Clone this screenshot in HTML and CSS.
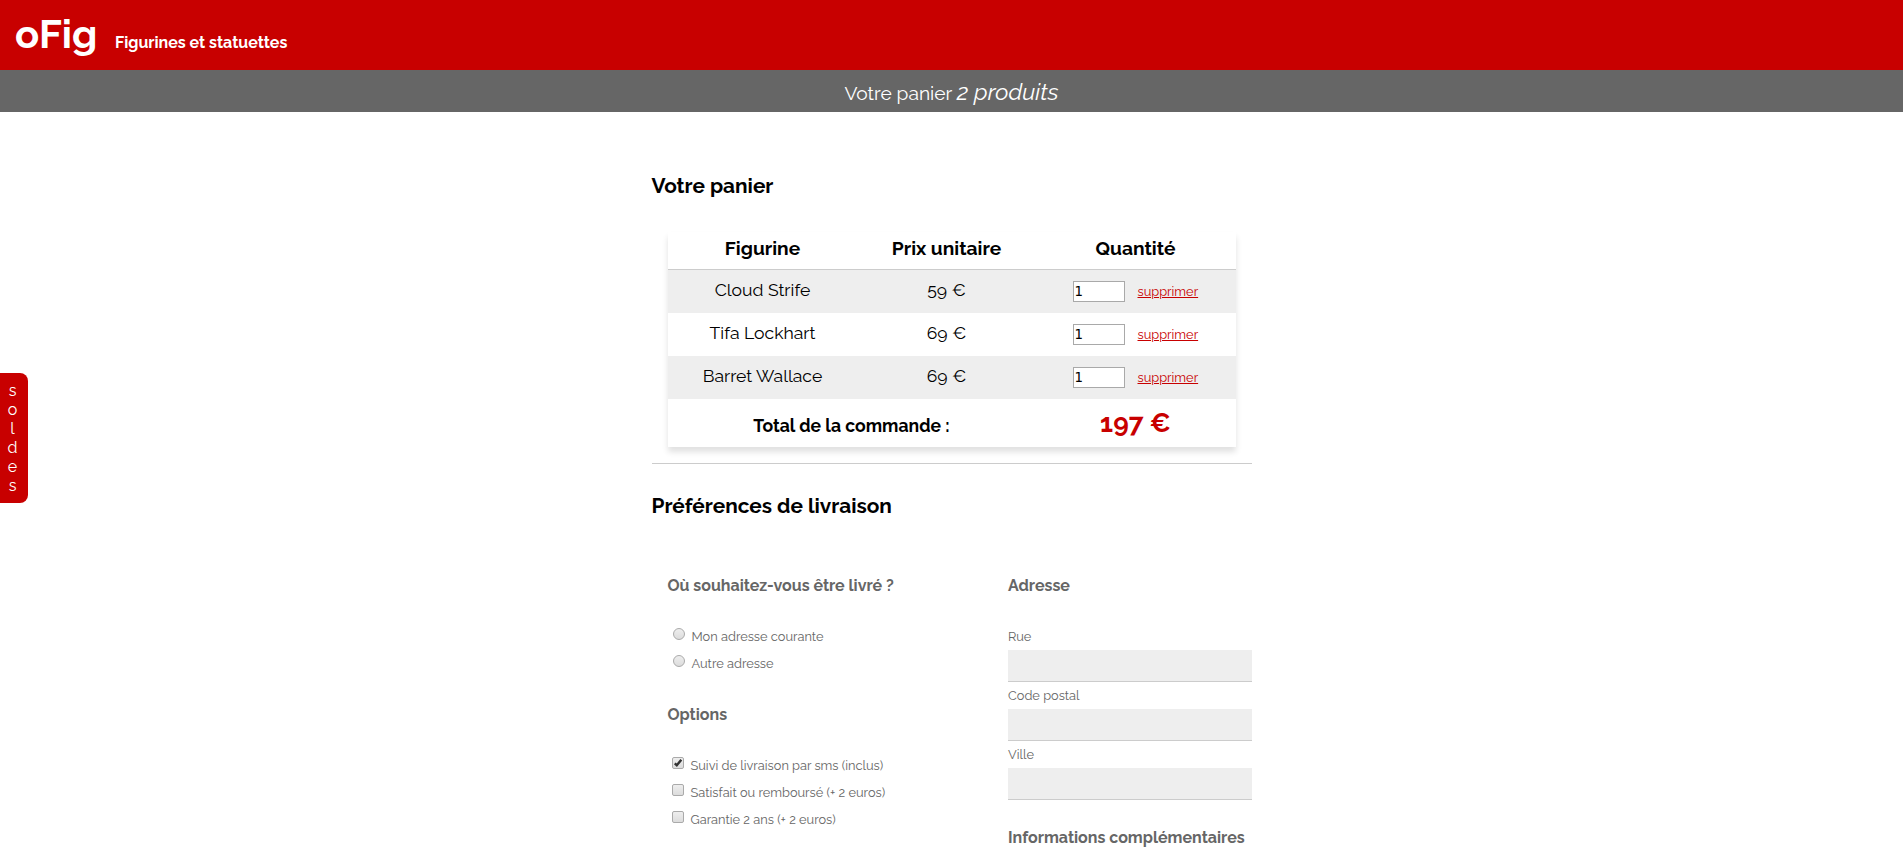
FILE: index.html
```
<!DOCTYPE html>
<html lang="fr">
<head>
<meta charset="utf-8">
<title>oFig - Votre panier</title>
<link rel="stylesheet" href="styles.css">
</head>
<body>
<header class="header">
  <h1 class="logo">oFig</h1>
  <p class="tagline">Figurines et statuettes</p>
</header>
<div class="cart-bar">Votre panier <em>2 produits</em></div>
<aside class="sales"><span>s</span><span>o</span><span>l</span><span>d</span><span>e</span><span>s</span></aside>
<main class="main">
  <h2 class="title">Votre panier</h2>
  <table class="cart">
    <thead>
      <tr><th class="c1">Figurine</th><th class="c2">Prix unitaire</th><th class="c3">Quantité</th></tr>
    </thead>
    <tbody>
      <tr><td>Cloud Strife</td><td>59 €</td><td><div class="qty"><input class="qty-input" type="text" value="1"><a class="remove" href="#">supprimer</a></div></td></tr>
      <tr><td>Tifa Lockhart</td><td>69 €</td><td><div class="qty"><input class="qty-input" type="text" value="1"><a class="remove" href="#">supprimer</a></div></td></tr>
      <tr><td>Barret Wallace</td><td>69 €</td><td><div class="qty"><input class="qty-input" type="text" value="1"><a class="remove" href="#">supprimer</a></div></td></tr>
    </tbody>
    <tfoot>
      <tr><td colspan="2" class="total-label">Total de la commande :</td><td class="total">197 €</td></tr>
    </tfoot>
  </table>
  <hr class="rule">
  <h2 class="title title-delivery">Préférences de livraison</h2>
  <form class="delivery">
    <div class="col-left">
      <h3 class="subtitle">Où souhaitez-vous être livré ?</h3>
      <label class="choice"><input class="radio" type="radio" name="lieu">Mon adresse courante</label>
      <label class="choice"><input class="radio" type="radio" name="lieu">Autre adresse</label>
      <h3 class="subtitle options">Options</h3>
      <label class="choice"><span class="check"><svg viewBox="0 0 12 12"><path d="M2.8 6.3 4.8 8.3 9.3 2.8"/></svg></span>Suivi de livraison par sms (inclus)</label>
      <label class="choice"><span class="check"></span>Satisfait ou remboursé (+ 2 euros)</label>
      <label class="choice"><span class="check"></span>Garantie 2 ans (+ 2 euros)</label>
    </div>
    <div class="col-right">
      <h3 class="subtitle">Adresse</h3>
      <label class="field">Rue<input class="text" type="text"></label>
      <label class="field">Code postal<input class="text" type="text"></label>
      <label class="field">Ville<input class="text" type="text"></label>
      <h3 class="subtitle infos">Informations complémentaires</h3>
    </div>
  </form>
</main>
</body>
</html>
```
FILE: styles.css
```
* { box-sizing: border-box; }
html, body { height: 100%; }
body {
  margin: 0;
  overflow: hidden;
  background: #fff;
  color: #000;
  font-family: Raleway, Lato, sans-serif;
}
h1, h2, h3, p { margin: 0; }

.header {
  display: flex;
  height: 70px;
  padding-left: 15px;
  align-items: baseline;
  background: #c80000;
  color: #fff;
}
.logo { width: 100px; font-size: 40px; line-height: 68px; }
.tagline { font-size: 16px; font-weight: 700; }

.cart-bar {
  height: 42px;
  overflow: hidden;
  background: #666;
  color: #fff;
  font-size: 19.2px;
  line-height: 44px;
  text-align: center;
}
.cart-bar em { font-size: 23.04px; }

.sales {
  position: absolute;
  top: 373px;
  left: 0;
  display: flex;
  flex-direction: column;
  width: 28px;
  height: 130px;
  padding: 8px 3px 0 0;
  border-radius: 0 8px 8px 0;
  background: #c80000;
  color: #fff;
  font-size: 16px;
  line-height: 19px;
  text-align: center;
}

.main { width: 600px; margin: 0 auto; padding-top: 59px; }
.title { font-size: 20.8px; line-height: 30px; }

.cart {
  width: 568px;
  margin: 31px 16px 0;
  border-collapse: separate;
  border-spacing: 0;
  table-layout: fixed;
  box-shadow: 0 5px 6px rgba(0, 0, 0, .12);
  font-size: 17.6px;
  text-align: center;
}
.cart th {
  height: 38px;
  padding: 0 0 4px;
  border-bottom: 1px solid #ccc;
  font-size: 19.2px;
  line-height: 33px;
}
.c1 { width: 190px; }
.c2 { width: 178px; }
.cart td { height: 43px; padding: 0 0 3px; line-height: 40px; }
.cart tbody tr:nth-child(odd) { background: #eee; }
.qty { display: flex; align-items: center; height: 40px; padding-left: 37px; gap: 13px; }
.qty-input {
  width: 52px;
  height: 21px;
  margin-top: 3px;
  padding: 0 1px;
  border: 1px solid #a9a9a9;
  background: #fff;
  font: 13.33px "DejaVu Sans", sans-serif;
}
.remove { padding-top: 3px; color: #c80000; font-size: 12.8px; }
.cart td.total-label { height: 48px; padding: 5px 0 0; font-size: 17.6px; font-weight: 700; }
.cart td.total { padding: 0; line-height: 48px; color: #c80000; font-size: 26.4px; font-weight: 700; }

.rule { height: 1px; margin: 16px 0 0; border: 0; background: #ccc; }
.title-delivery { margin-top: 27px; }

.delivery { display: flex; justify-content: space-between; padding-left: 16px; color: #666; }
.col-left { width: 284px; }
.col-right { width: 243.5px; }
.subtitle { margin: 54px 0 27px; font-size: 16px; line-height: 22px; white-space: nowrap; }
.choice {
  display: flex;
  align-items: flex-start;
  height: 27px;
  padding-left: 4px;
  font-size: 12.8px;
  line-height: 26px;
}
.radio, .check {
  flex: none;
  appearance: none;
  width: 12px;
  height: 12px;
  margin: 4px 7px 0 0;
  border: 1px solid #aaa;
  background: linear-gradient(#eee, #dcdcdc);
}
.radio { margin-left: 1px; border-radius: 50%; }
.check { border-radius: 2px; }
.check svg { display: block; width: 12px; height: 12px; margin: -1px; fill: none; stroke: #333; stroke-width: 2.4; }
.options { margin: 26px 0 27px; }
.field { display: block; height: 59px; font-size: 12.8px; line-height: 26px; }
.text { display: block; width: 100%; height: 32px; padding: 0 8px; border: 0; border-bottom: 1px solid #ccc; background: #eee; }
.infos { margin-top: 26px; }
```
